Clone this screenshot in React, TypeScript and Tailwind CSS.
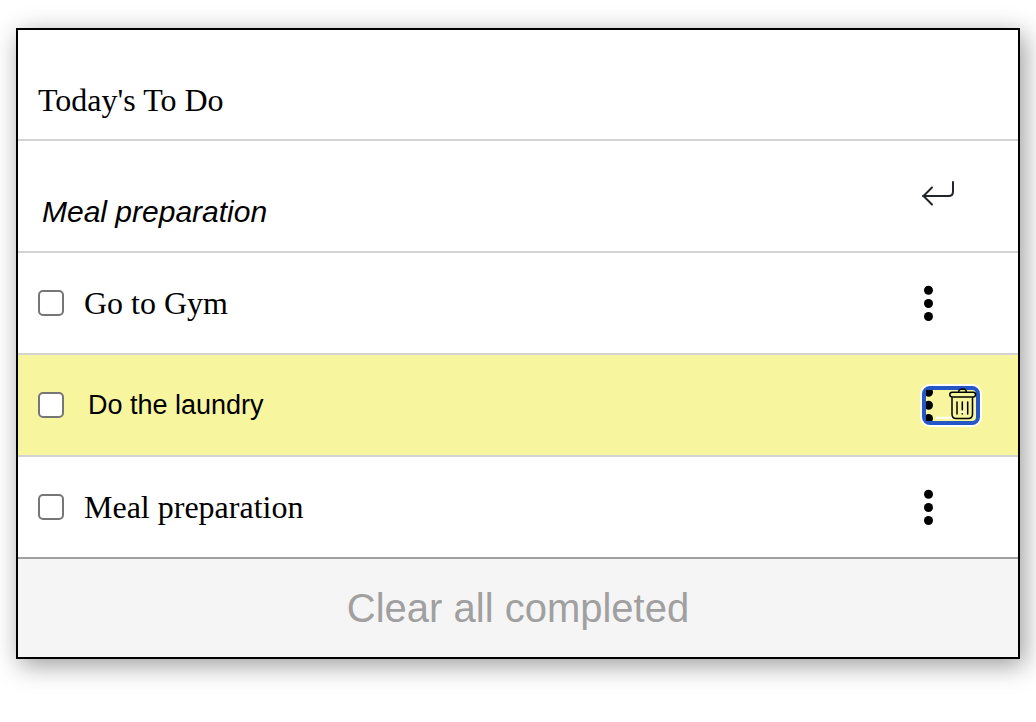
import { useState } from "react";

const tasks = [
  { id: 1, text: "Go to Gym", editing: false },
  { id: 2, text: "Do the laundry", editing: true },
  { id: 3, text: "Meal preparation", editing: false },
];

function ReturnIcon() {
  return (
    <svg width="34" height="28" viewBox="0 0 34 28" fill="none" stroke="#212529" strokeWidth="2" strokeLinecap="round" strokeLinejoin="round" aria-hidden="true">
      <path d="M32 3V12.500Q32 17 27.500 17H2" />
      <path d="M11 8.500L2.500 17L11 25.500" />
    </svg>
  );
}

function DotsIcon() {
  return (
    <svg width="10" height="36" viewBox="0 0 10 36" aria-hidden="true">
      <circle cx="4.5" cy="5.3" r="4.5" />
      <circle cx="4.5" cy="18.500" r="4.5" />
      <circle cx="4.5" cy="31.500" r="4.5" />
    </svg>
  );
}

function DotsTrashIcon() {
  return (
    <svg className="block h-full w-full overflow-visible" viewBox="0 0 50 31" fill="none" stroke="#000" strokeWidth="1.5" strokeLinecap="round" strokeLinejoin="round" aria-hidden="true">
      <svg width="50" height="31" viewBox="0 0 50 31" overflow="hidden" fill="#000" stroke="none">
        <circle cx="2.5" cy="2.2" r="4.5" />
        <circle cx="2.5" cy="15.3" r="4.5" />
        <circle cx="2.5" cy="28.5" r="4.5" />
      </svg>
      <path d="M10 27.800H26" stroke="#fff" strokeWidth="2" strokeLinecap="butt" />
      <rect x="23.800" y="2.200" width="25.800" height="4.800" rx="2.400" />
      <path d="M32.600 2.200Q32.600-.9 36.500-.9T40.400 2.200" />
      <path d="M26 8V24.300Q26 28.500 30.200 28.500H42.300Q46.500 28.500 46.500 24.300V8" />
      <path d="M31 12V24M36.300 12V20M41.700 12V24" />
      <path d="M36.300 23.800V24" />
      <circle cx="36.300" cy="21.900" r="1.200" fill="#fff" stroke="none" />
    </svg>
  );
}

export default function App() {
  const [entry, setEntry] = useState("Meal preparation");
  const [edited, setEdited] = useState("Do the laundry");

  return (
    <div className="bg-white px-4 pt-7 pb-16">
      <main className="border-2 border-black bg-white font-['Liberation_Serif',serif] text-[32px] leading-9 text-black shadow-[4px_6px_24px_rgba(0,0,0,0.4)]">
        <header className="border-b-2 border-[#d3d3d3] px-5 pt-[52px] pb-[21px]">
          <h1>Today's To Do</h1>
        </header>
        <form className="flex items-start justify-between border-b-2 border-[#d3d3d3] pt-9 pr-[63px] pb-[21px] pl-6" onSubmit={(e) => e.preventDefault()}>
          <input
            aria-label="Add to your list"
            className="mt-4 h-[37px] min-w-0 flex-1 bg-transparent font-['Liberation_Sans',sans-serif] text-[30px] italic outline-none"
            value={entry}
            onChange={(e) => setEntry(e.target.value)}
          />
          <button type="submit" aria-label="Add" className="mt-0.5">
            <ReturnIcon />
          </button>
        </form>
        <ul>
          {tasks.map((task, i) => (
            <li
              key={task.id}
              className={`flex items-center border-b-2 py-8 pl-5 ${task.editing ? "bg-[#f8f59f] pr-[38px]" : "pr-[84px]"} ${i === tasks.length - 1 ? "border-[#a0a0a0]" : "border-[#d3d3d3]"}`}
            >
              <input
                type="checkbox"
                id={`task-${task.id}`}
                aria-label={task.text}
                className="size-[26px] shrink-0 appearance-none rounded-[5px] border-2 border-[#767676] bg-white checked:bg-[#2457c5]"
              />
              {task.editing ? (
                <input
                  aria-label="Edit task"
                  className="ml-6 h-9 min-w-0 flex-1 bg-transparent font-['Liberation_Sans',sans-serif] text-[27px] outline-none"
                  value={edited}
                  onChange={(e) => setEdited(e.target.value)}
                />
              ) : (
                <label htmlFor={`task-${task.id}`} className="ml-5 flex-1">
                  {task.text}
                </label>
              )}
              {task.editing ? (
                <button type="button" aria-label="Delete task" className="-my-1 h-[39px] w-[58px] shrink-0 rounded-lg border-4 border-[#2457c5] ring-2 ring-white">
                  <DotsTrashIcon />
                </button>
              ) : (
                <button type="button" aria-label="Task options">
                  <DotsIcon />
                </button>
              )}
            </li>
          ))}
        </ul>
        <button type="button" className="block w-full bg-[#f5f5f5] py-[25px] font-['Liberation_Sans',sans-serif] text-[40px] leading-12 text-[#a0a0a0]">
          Clear all completed
        </button>
      </main>
    </div>
  );
}
